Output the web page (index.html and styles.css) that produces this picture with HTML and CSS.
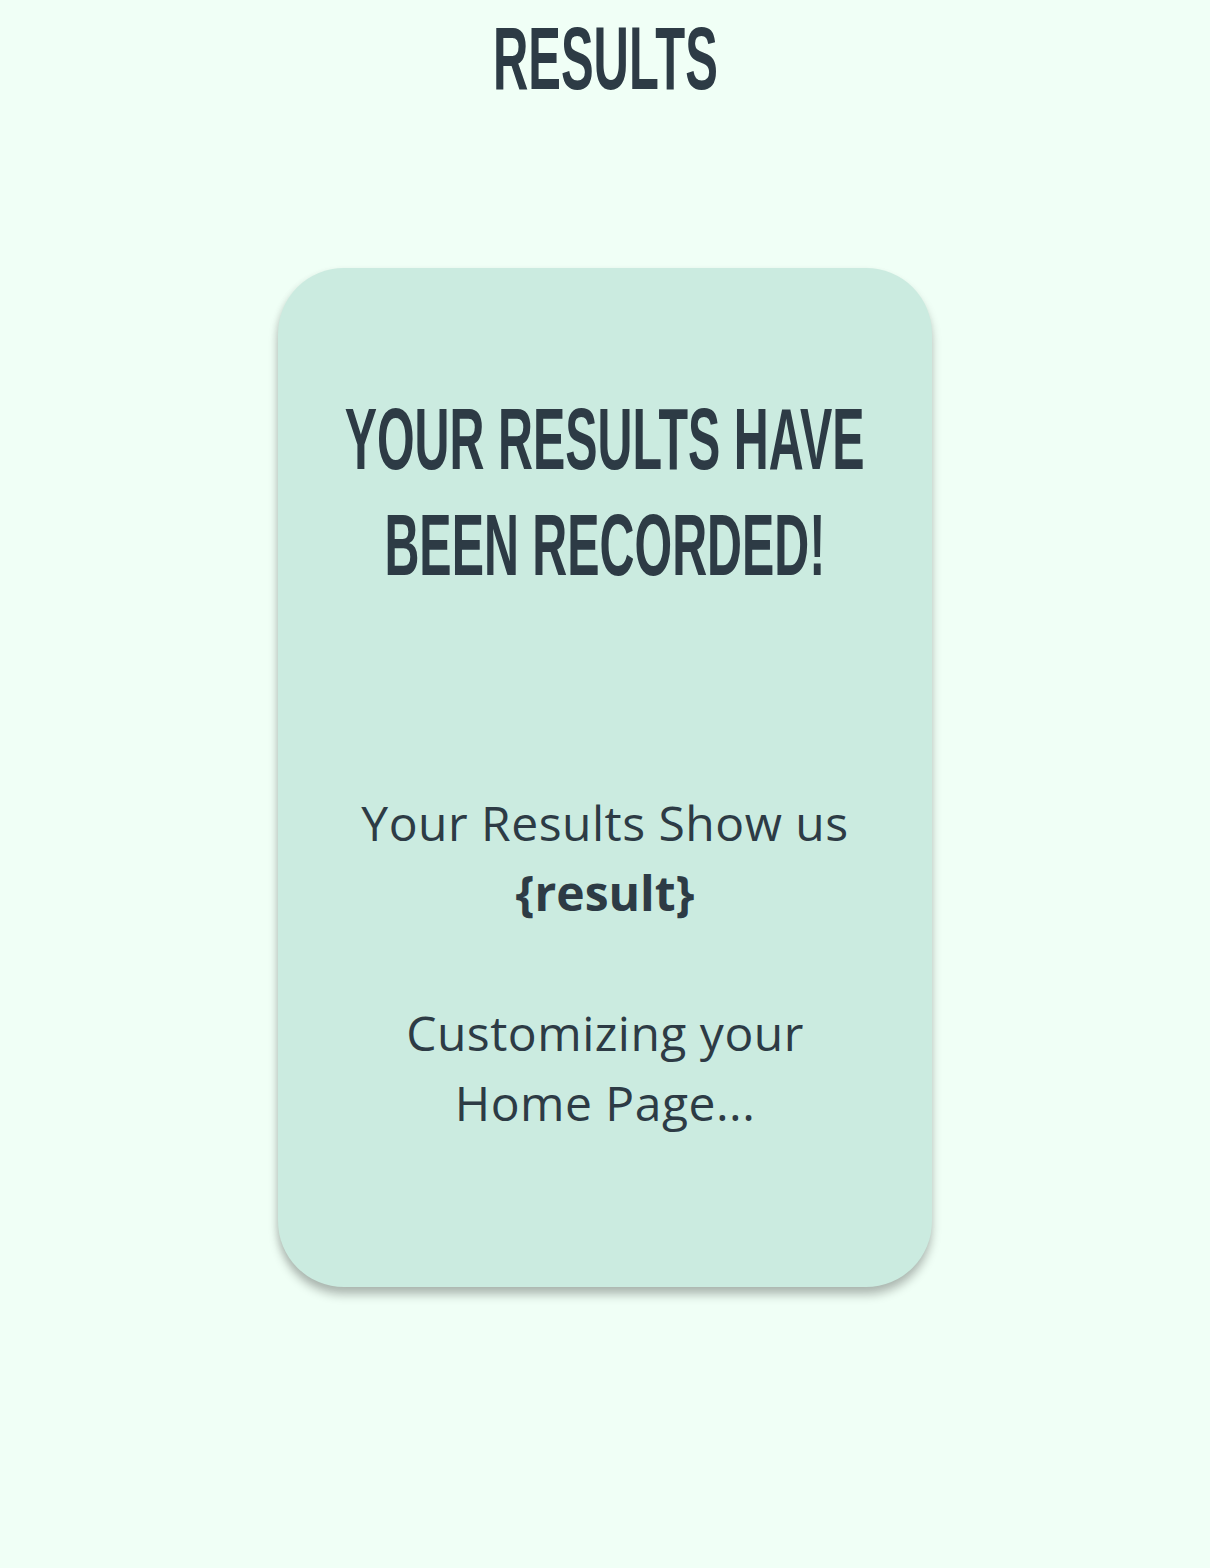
FILE: index.html
```html
<!DOCTYPE html>
<html lang="en">
<head>
<meta charset="utf-8">
<title>Results</title>
<link rel="stylesheet" href="styles.css">
</head>
<body>
<header class="page-head">
  <h1 class="title"><span class="squeeze">RESULTS</span></h1>
</header>
<main class="stage">
  <section class="card">
    <h2 class="card-title">
      <span class="squeeze">YOUR RESULTS HAVE</span>
      <span class="squeeze">BEEN RECORDED!</span>
    </h2>
    <p class="card-text">Your Results Show us<br><strong>{result}</strong><br><br>Customizing your<br>Home Page...</p>
  </section>
</main>
</body>
</html>
```
FILE: styles.css
```css
html, body {
  margin: 0;
  padding: 0;
}
body {
  background: #f0fff6;
  color: #2d3b45;
  min-height: 1568px;
}
.page-head {
  display: flex;
  justify-content: center;
  padding-top: 8px;
}
.title,
.card-title {
  margin: 0;
  font-family: "Liberation Sans Narrow", "Liberation Sans", sans-serif;
  font-weight: 700;
  display: flex;
  flex-direction: column;
  align-items: center;
  white-space: nowrap;
}
.title {
  font-size: 89px;
  line-height: 100px;
}
.squeeze {
  display: inline-block;
  transform: scaleX(0.55);
  transform-origin: center;
}
.stage {
  display: flex;
  justify-content: center;
  padding-top: 160px;
}
.card {
  width: 654px;
  height: 1019px;
  box-sizing: border-box;
  background: #cbebe0;
  border-radius: 66px;
  box-shadow: 0 8px 10px rgba(0, 0, 0, 0.25), -2px 2px 6px rgba(0, 0, 0, 0.06);
  padding-top: 118px;
  display: flex;
  flex-direction: column;
  align-items: center;
}
.card-title {
  font-size: 88px;
  line-height: 106px;
}
.card-text {
  margin: 190px 0 0;
  font-family: "Open Sans", sans-serif;
  font-size: 48px;
  line-height: 70px;
  letter-spacing: 0.5px;
  text-align: center;
  font-weight: 400;
}
.card-text strong {
  font-weight: 700;
  letter-spacing: 0;
}
```
